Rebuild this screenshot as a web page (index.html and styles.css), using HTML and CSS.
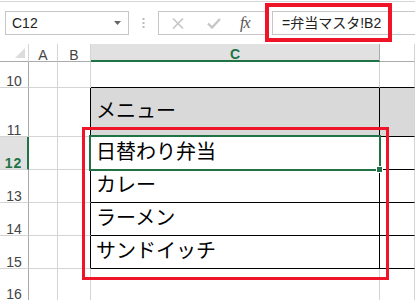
FILE: index.html
```html
<!DOCTYPE html>
<html>
<head>
<meta charset="utf-8">
<link rel="stylesheet" href="styles.css">
</head>
<body>
<div class="top">
  <div class="namebox"><span>C12</span><svg class="arrow" width="7" height="4" viewBox="0 0 7 4"><polygon points="0,0 7,0 3.5,4" fill="#666"/></svg></div>
  <div class="dots"><svg width="3" height="11" viewBox="0 0 3 11"><rect x="0.5" y="0" width="2" height="2" fill="#bcbcbc"/><rect x="0.5" y="4" width="2" height="2" fill="#bcbcbc"/><rect x="0.5" y="8" width="2" height="2" fill="#bcbcbc"/></svg></div>
  <div class="btns">
    <svg class="x" width="12" height="11" viewBox="0 0 12 11"><path d="M1 0.5 L11 10.5 M11 0.5 L1 10.5" stroke="#c6c6c6" stroke-width="1.6" fill="none"/></svg>
    <svg class="ok" width="14" height="11" viewBox="0 0 14 11"><path d="M1 5.5 L5 9.5 L13 1" stroke="#c6c6c6" stroke-width="2.4" fill="none"/></svg>
    <span class="fx">fx</span>
  </div>
  <div class="formula">=弁当マスタ!B2</div>
</div>
<div class="sheet">
  <div class="corner"><svg width="10" height="10" viewBox="0 0 10 10"><polygon points="10,0 10,10 0,10" fill="#dcdcdc"/></svg></div>
  <div class="ch">A</div>
  <div class="ch">B</div>
  <div class="ch ch-sel">C</div>
  <div class="ch"></div>

  <div class="rh">10</div>
  <div class="c"></div>
  <div class="c"></div>
  <div class="c b-bottom"></div>
  <div class="c b-bottom"></div>

  <div class="rh">11</div>
  <div class="c"></div>
  <div class="c b-right"></div>
  <div class="c t b-right b-bottom fill">メニュー</div>
  <div class="c b-bottom fill"></div>

  <div class="rh rh-sel">12</div>
  <div class="c"></div>
  <div class="c b-right"></div>
  <div class="c t b-right b-bottom">日替わり弁当</div>
  <div class="c b-bottom"></div>

  <div class="rh">13</div>
  <div class="c"></div>
  <div class="c b-right"></div>
  <div class="c t b-right b-bottom">カレー</div>
  <div class="c b-bottom"></div>

  <div class="rh">14</div>
  <div class="c"></div>
  <div class="c b-right"></div>
  <div class="c t b-right b-bottom">ラーメン</div>
  <div class="c b-bottom"></div>

  <div class="rh">15</div>
  <div class="c"></div>
  <div class="c b-right"></div>
  <div class="c t b-right b-bottom">サンドイッチ</div>
  <div class="c b-bottom"></div>

  <div class="rh">16</div>
  <div class="c"></div>
  <div class="c"></div>
  <div class="c"></div>
  <div class="c"></div>

  <div class="sel"></div>
  <div class="handle"></div>
</div>
<div class="mark mark1"></div>
<div class="mark mark2"></div>
</body>
</html>
```
FILE: styles.css
```css
* { box-sizing: border-box; }
body {
  margin: 0;
  width: 415px;
  height: 300px;
  overflow: hidden;
  background: #fff;
  position: relative;
  font-family: "Liberation Sans", "Noto Sans CJK JP", sans-serif;
}
.top {
  margin-top: 1px;
  height: 43px;
  border-top: 1px solid #d6d6d6;
  display: flex;
  align-items: flex-start;
  padding-top: 9px;
  padding-left: 5px;
  overflow: hidden;
}
.namebox {
  width: 124px;
  height: 24px;
  border: 1px solid #c6c6c6;
  display: flex;
  align-items: center;
  justify-content: space-between;
  padding: 0 7px 0 6px;
  font-size: 14px;
  color: #222;
}
.namebox .arrow { margin-top: 0; }
.dots {
  width: 29px;
  padding-left: 13px;
  padding-top: 7px;
  display: flex;
}
.btns {
  width: 109px;
  height: 24px;
  border: 1px solid #c6c6c6;
  display: flex;
  align-items: center;
}
.btns .x { margin-left: 13px; }
.btns .ok { margin-left: 23px; }
.btns .fx {
  margin-left: 19px;
  font-family: "Liberation Serif", serif;
  font-style: italic;
  font-size: 16px;
  color: #555;
  letter-spacing: -1px;
}
.formula {
  margin-left: 5px;
  flex: 1;
  margin-right: -4px;
  height: 24px;
  border: 1px solid #c6c6c6;
  border-right: none;
  padding-left: 9px;
  font-size: 14px;
  line-height: 22px;
  color: #222;
  white-space: nowrap;
}
.sheet {
  position: relative;
  display: grid;
  grid-template-columns: 29px 29px 33px 289px 35px;
  grid-template-rows: 18px 26px 49px 33px 33px 33px 33px 32px;
}
.sheet > div {
  border-right: 1px solid #d4d4d4;
  border-bottom: 1px solid #d4d4d4;
}
.corner {
  display: flex;
  justify-content: flex-end;
  align-items: flex-end;
  padding: 0 3px 3px 0;
  border-bottom-color: #ababab !important;
}
.ch {
  font-size: 14px;
  color: #444;
  display: flex;
  justify-content: center;
  align-items: flex-end;
  line-height: 12px;
  border-bottom-color: #ababab !important;
}
.ch-sel {
  background: #e1e1e1;
  color: #217346;
  font-weight: bold;
  border-bottom: 2px solid #217346 !important;
  border-right-color: #ababab !important;
}
.rh {
  font-size: 14px;
  color: #444;
  display: flex;
  justify-content: center;
  align-items: flex-end;
  line-height: 12px;
  border-right-color: #ababab !important;
}
.rh-sel {
  background: #e1e1e1;
  color: #217346;
  font-weight: bold;
  border-right: 2px solid #217346 !important;
  letter-spacing: 1px;
}
.sheet > .b-right { border-right-color: #000; }
.sheet > .b-bottom { border-bottom-color: #000; }
.fill { background: #d9d9d9; }
.t {
  font-family: "Noto Sans CJK JP", sans-serif;
  font-size: 20px;
  line-height: 1;
  color: #000;
  display: flex;
  align-items: center;
  padding-left: 5px;
  padding-bottom: 4px;
  white-space: nowrap;
}
.sheet > .sel {
  position: absolute;
  left: 89px;
  top: 91px;
  width: 292px;
  height: 36px;
  border: 2px solid #217346;
}
.sheet > .handle {
  position: absolute;
  left: 377px;
  top: 123px;
  width: 5px;
  height: 5px;
  background: #217346;
  border: none;
  box-shadow: 0 0 0 1px #fff;
}
.mark {
  position: absolute;
  border-style: solid;
  border-color: #f01428;
}
.mark1 {
  left: 265px;
  top: 3px;
  width: 127px;
  height: 39px;
  border-width: 4px;
}
.mark2 {
  left: 82px;
  top: 127px;
  width: 307px;
  height: 153px;
  border-width: 3px;
}
```
